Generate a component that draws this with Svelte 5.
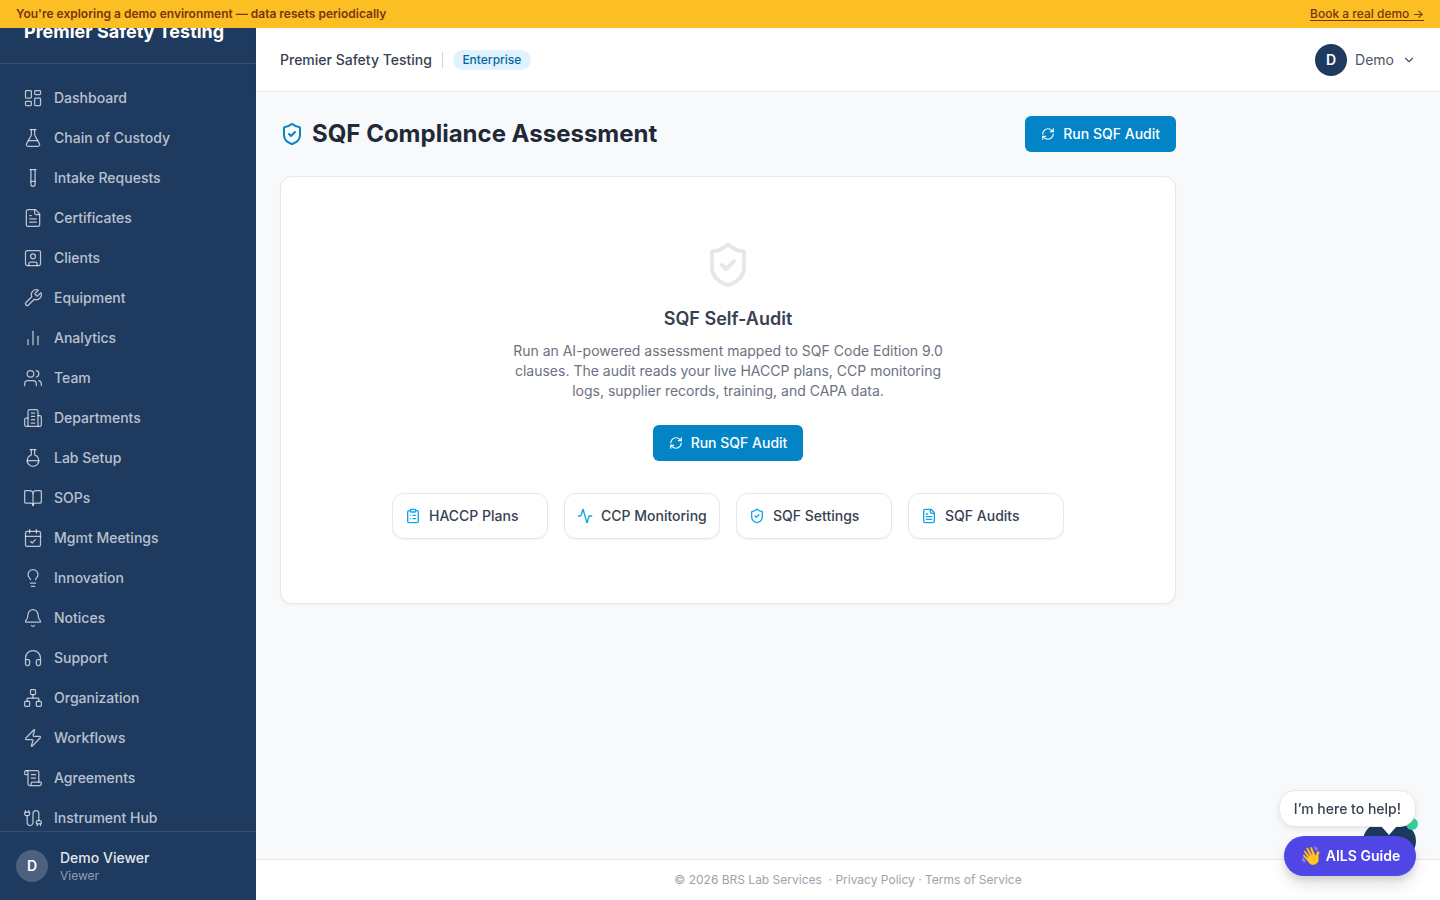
<script lang="ts">
  // Lucide-style icon bodies, kept as strings so nav rows can stay data driven.
  const ICONS: Record<string, string> = {
    dashboard: '<rect x="3" y="3" width="7" height="9" rx="1"/><rect x="14" y="3" width="7" height="5" rx="1"/><rect x="14" y="12" width="7" height="9" rx="1"/><rect x="3" y="16" width="7" height="5" rx="1"/>',
    flask: '<path d="M14 2v6a2 2 0 0 0 .245.96l5.51 10.08A2 2 0 0 1 18 22H6a2 2 0 0 1-1.755-2.96l5.51-10.08A2 2 0 0 0 10 8V2"/><path d="M6.453 15h11.094"/><path d="M8.5 2h7"/>',
    tube: '<path d="M14.5 2v17.5c0 1.4-1.1 2.5-2.5 2.5s-2.5-1.1-2.5-2.5V2"/><path d="M8.5 2h7"/><path d="M14.5 16h-5"/>',
    file: '<path d="M15 2H6a2 2 0 0 0-2 2v16a2 2 0 0 0 2 2h12a2 2 0 0 0 2-2V7Z"/><path d="M14 2v4a2 2 0 0 0 2 2h4"/><path d="M10 9H8"/><path d="M16 13H8"/><path d="M16 17H8"/>',
    client: '<rect x="3" y="3" width="18" height="18" rx="2"/><circle cx="12" cy="10" r="3"/><path d="M7 21v-2a2 2 0 0 1 2-2h6a2 2 0 0 1 2 2v2"/>',
    wrench: '<path d="M14.7 6.3a1 1 0 0 0 0 1.4l1.6 1.6a1 1 0 0 0 1.4 0l3.77-3.77a6 6 0 0 1-7.94 7.94l-6.91 6.91a2.12 2.12 0 0 1-3-3l6.91-6.91a6 6 0 0 1 7.94-7.94l-3.76 3.76z"/>',
    chart: '<path d="M18 20V10"/><path d="M12 20V4"/><path d="M6 20v-6"/>',
    users: '<path d="M16 21v-2a4 4 0 0 0-4-4H6a4 4 0 0 0-4 4v2"/><circle cx="9" cy="7" r="4"/><path d="M22 21v-2a4 4 0 0 0-3-3.87"/><path d="M16 3.13a4 4 0 0 1 0 7.75"/>',
    building: '<path d="M6 22V4a2 2 0 0 1 2-2h8a2 2 0 0 1 2 2v18Z"/><path d="M6 12H4a2 2 0 0 0-2 2v6a2 2 0 0 0 2 2h2"/><path d="M18 9h2a2 2 0 0 1 2 2v9a2 2 0 0 1-2 2h-2"/><path d="M10 6h4"/><path d="M10 10h4"/><path d="M10 14h4"/><path d="M10 18h4"/>',
    flaskRound: '<path d="M10 2v6.292a7 7 0 1 0 4 0V2"/><path d="M5 15h14"/><path d="M8.5 2h7"/>',
    book: '<path d="M12 7v14"/><path d="M3 18a1 1 0 0 1-1-1V4a1 1 0 0 1 1-1h5a4 4 0 0 1 4 4 4 4 0 0 1 4-4h5a1 1 0 0 1 1 1v13a1 1 0 0 1-1 1h-6a3 3 0 0 0-3 3 3 3 0 0 0-3-3z"/>',
    calendar: '<path d="M8 2v4"/><path d="M16 2v4"/><rect x="3" y="4" width="18" height="18" rx="2"/><path d="M3 10h18"/><path d="m9 16 2 2 4-4"/>',
    bulb: '<path d="M15 14c.2-1 .7-1.7 1.5-2.5 1-.9 1.5-2.2 1.5-3.5A6 6 0 0 0 6 8c0 1 .2 2.2 1.5 3.5.7.7 1.3 1.5 1.5 2.5"/><path d="M9 18h6"/><path d="M10 22h4"/>',
    bell: '<path d="M10.268 21a2 2 0 0 0 3.464 0"/><path d="M3.262 15.326A1 1 0 0 0 4 17h16a1 1 0 0 0 .74-1.673C19.41 13.956 18 12.499 18 8A6 6 0 0 0 6 8c0 4.499-1.411 5.956-2.738 7.326"/>',
    headphones: '<path d="M3 14h3a2 2 0 0 1 2 2v3a2 2 0 0 1-2 2H5a2 2 0 0 1-2-2v-7a9 9 0 0 1 18 0v7a2 2 0 0 1-2 2h-1a2 2 0 0 1-2-2v-3a2 2 0 0 1 2-2h3"/>',
    network: '<rect x="16" y="16" width="6" height="6" rx="1"/><rect x="2" y="16" width="6" height="6" rx="1"/><rect x="9" y="2" width="6" height="6" rx="1"/><path d="M5 16v-3a1 1 0 0 1 1-1h12a1 1 0 0 1 1 1v3"/><path d="M12 12V8"/>',
    zap: '<path d="M4 14a1 1 0 0 1-.78-1.63l9.9-10.2a.5.5 0 0 1 .86.46l-1.92 6.02A1 1 0 0 0 13 10h7a1 1 0 0 1 .78 1.63l-9.9 10.2a.5.5 0 0 1-.86-.46l1.92-6.02A1 1 0 0 0 11 14z"/>',
    scroll: '<path d="M15 12h-5"/><path d="M15 8h-5"/><path d="M19 17V5a2 2 0 0 0-2-2H4"/><path d="M8 21h12a2 2 0 0 0 2-2v-1a1 1 0 0 0-1-1H11a1 1 0 0 0-1 1v1a2 2 0 1 1-4 0V5a2 2 0 1 0-4 0v2a1 1 0 0 0 1 1h3"/>',
    cable: '<path d="M17 21v-2a1 1 0 0 1-1-1v-1a2 2 0 0 1 2-2h2a2 2 0 0 1 2 2v1a1 1 0 0 1-1 1"/><path d="M19 15V6.5a1 1 0 0 0-7 0v11a1 1 0 0 1-7 0V9"/><path d="M21 21v-2h-4"/><path d="M3 5h4V3"/><path d="M7 5a1 1 0 0 1 1 1v1a2 2 0 0 1-2 2H4a2 2 0 0 1-2-2V6a1 1 0 0 1 1-1V3"/>',
    shield: '<path d="M20 13c0 5-3.5 7.5-7.66 8.95a1 1 0 0 1-.67-.01C7.5 20.5 4 18 4 13V6a1 1 0 0 1 1-1c2 0 4.5-1.2 6.24-2.72a1.17 1.17 0 0 1 1.52 0C14.51 3.81 17 5 19 5a1 1 0 0 1 1 1z"/><path d="m9 12 2 2 4-4"/>',
    refresh: '<path d="M3 12a9 9 0 0 1 9-9 9.75 9.75 0 0 1 6.74 2.74L21 8"/><path d="M21 3v5h-5"/><path d="M21 12a9 9 0 0 1-9 9 9.75 9.75 0 0 1-6.74-2.74L3 16"/><path d="M8 16H3v5"/>',
    clipboard: '<rect x="8" y="2" width="8" height="4" rx="1"/><path d="M16 4h2a2 2 0 0 1 2 2v14a2 2 0 0 1-2 2H6a2 2 0 0 1-2-2V6a2 2 0 0 1 2-2h2"/><path d="M12 11h4"/><path d="M12 16h4"/><path d="M8 11h.01"/><path d="M8 16h.01"/>',
    activity: '<path d="M22 12h-2.48a2 2 0 0 0-1.93 1.46l-2.35 8.36a.25.25 0 0 1-.48 0L9.24 2.18a.25.25 0 0 0-.48 0l-2.35 8.36A2 2 0 0 1 4.49 12H2"/>',
    chevron: '<path d="m6 9 6 6 6-6"/>',
  };

  const NAV = [
    ['Dashboard', 'dashboard'],
    ['Chain of Custody', 'flask'],
    ['Intake Requests', 'tube'],
    ['Certificates', 'file'],
    ['Clients', 'client'],
    ['Equipment', 'wrench'],
    ['Analytics', 'chart'],
    ['Team', 'users'],
    ['Departments', 'building'],
    ['Lab Setup', 'flaskRound'],
    ['SOPs', 'book'],
    ['Mgmt Meetings', 'calendar'],
    ['Innovation', 'bulb'],
    ['Notices', 'bell'],
    ['Support', 'headphones'],
    ['Organization', 'network'],
    ['Workflows', 'zap'],
    ['Agreements', 'scroll'],
    ['Instrument Hub', 'cable'],
  ];

  const LINKS = [
    ['HACCP Plans', 'clipboard'],
    ['CCP Monitoring', 'activity'],
    ['SQF Settings', 'shield'],
    ['SQF Audits', 'file'],
  ];
</script>

{#snippet icon(name: string, size: number, width = 2)}
  <svg
    class="icon"
    xmlns="http://www.w3.org/2000/svg"
    viewBox="0 0 24 24"
    width={size}
    height={size}
    fill="none"
    stroke="currentColor"
    stroke-width={width}
    stroke-linecap="round"
    stroke-linejoin="round">{@html ICONS[name]}</svg
  >
{/snippet}

{#snippet runButton()}
  <button type="button" class="run-btn">
    {@render icon('refresh', 14)}
    Run SQF Audit
  </button>
{/snippet}

<div class="banner">
  <span>You're exploring a demo environment — data resets periodically</span>
  <a href="#demo">Book a real demo →</a>
</div>

<div class="shell">
  <aside class="sidebar">
    <div class="brand">Premier Safety Testing</div>
    <nav class="nav">
      {#each NAV as [label, name]}
        <a class="nav-item" href="#nav">
          {@render icon(name, 20, 1.5)}
          <span>{label}</span>
        </a>
      {/each}
    </nav>
    <div class="side-user">
      <span class="side-avatar">D</span>
      <div>
        <div class="side-name">Demo Viewer</div>
        <div class="side-role">Viewer</div>
      </div>
    </div>
  </aside>

  <div class="main">
    <header class="topbar">
      <div class="org">
        <span class="org-name">Premier Safety Testing</span>
        <span class="org-sep"></span>
        <span class="org-plan">Enterprise</span>
      </div>
      <button type="button" class="user-menu">
        <span class="user-avatar">D</span>
        <span class="user-name">Demo</span>
        {@render icon('chevron', 14)}
      </button>
    </header>

    <main class="content">
      <div class="page">
        <div class="page-head">
          <h1>
            <span class="head-icon">{@render icon('shield', 24)}</span>
            SQF Compliance Assessment
          </h1>
          {@render runButton()}
        </div>

        <section class="card">
          <span class="card-icon">{@render icon('shield', 48)}</span>
          <h2>SQF Self-Audit</h2>
          <p>
            Run an AI-powered assessment mapped to SQF Code Edition 9.0 clauses. The audit reads
            your live HACCP plans, CCP monitoring logs, supplier records, training, and CAPA data.
          </p>
          {@render runButton()}
          <div class="links">
            {#each LINKS as [label, name]}
              <a class="link" href="#link">
                <span class="link-icon">{@render icon(name, 16)}</span>
                {label}
              </a>
            {/each}
          </div>
        </section>
      </div>
    </main>

    <footer class="footer">
      © 2026 BRS Lab Services &nbsp;· Privacy Policy · Terms of Service
    </footer>
  </div>
</div>

<div class="guide">
  <span class="guide-avatar"></span>
  <span class="guide-dot"></span>
  <div class="guide-bubble">I’m here to help!</div>
  <button type="button" class="guide-btn"><span class="wave">👋</span> AILS Guide</button>
</div>

<style>
  :global(body) {
    margin: 0;
    font-family: Inter, 'Noto Sans', sans-serif;
    background: #f8f9fb;
    overflow: hidden;
  }

  .icon {
    display: block;
    flex: none;
  }

  .banner {
    position: fixed;
    top: 0;
    left: 0;
    right: 0;
    z-index: 20;
    height: 28px;
    box-sizing: border-box;
    padding: 0 16px;
    display: flex;
    align-items: center;
    justify-content: space-between;
    background: #fbbf24;
    color: #78350f;
    font-size: 12px;
    line-height: 16px;
    font-weight: 600;
  }

  .banner a {
    color: inherit;
    font-weight: 500;
    text-decoration: underline;
    text-underline-offset: 2px;
  }

  .shell {
    display: flex;
    height: 100vh;
  }

  .sidebar {
    width: 256px;
    flex: none;
    display: flex;
    flex-direction: column;
    background: #1e3a5f;
    color: #fff;
  }

  .brand {
    height: 64px;
    flex: none;
    box-sizing: border-box;
    padding-left: 24px;
    display: flex;
    align-items: center;
    border-bottom: 1px solid rgba(255, 255, 255, 0.1);
    font-size: 18px;
    font-weight: 700;
  }

  .nav {
    flex: 1;
    min-height: 0;
    overflow: hidden;
    padding-top: 14px;
  }

  .nav-item {
    height: 40px;
    padding-left: 23px;
    display: flex;
    align-items: center;
    gap: 11px;
    color: rgba(255, 255, 255, 0.7);
    font-size: 14px;
    line-height: 20px;
    font-weight: 500;
    text-decoration: none;
  }

  .side-user {
    height: 69px;
    flex: none;
    box-sizing: border-box;
    padding: 0 16px;
    display: flex;
    align-items: center;
    gap: 12px;
    border-top: 1px solid rgba(255, 255, 255, 0.1);
  }

  .side-avatar {
    width: 32px;
    height: 32px;
    border-radius: 50%;
    display: flex;
    align-items: center;
    justify-content: center;
    background: rgba(255, 255, 255, 0.2);
    font-size: 14px;
    line-height: 20px;
    font-weight: 600;
  }

  .side-name {
    font-size: 14px;
    font-weight: 500;
    line-height: 20px;
    color: rgba(255, 255, 255, 0.9);
  }

  .side-role {
    font-size: 12px;
    line-height: 16px;
    color: rgba(255, 255, 255, 0.5);
  }

  .main {
    flex: 1;
    min-width: 0;
    padding-top: 28px;
    display: flex;
    flex-direction: column;
  }

  .topbar {
    height: 64px;
    flex: none;
    box-sizing: border-box;
    padding: 0 24px;
    display: flex;
    align-items: center;
    justify-content: space-between;
    background: #fff;
    border-bottom: 1px solid #e5e7eb;
    box-shadow: 0 1px 2px rgba(0, 0, 0, 0.05);
  }

  .org {
    display: flex;
    align-items: center;
  }

  .org-name {
    font-size: 14px;
    font-weight: 500;
    color: #374151;
  }

  .org-sep {
    width: 1px;
    height: 16px;
    margin: 0 10px;
    background: #d1d5db;
  }

  .org-plan {
    padding: 2px 9.5px;
    border-radius: 999px;
    background: #e0f2fe;
    color: #0369a1;
    font-size: 12px;
    line-height: 16px;
    font-weight: 500;
  }

  .user-menu {
    appearance: none;
    border: 0;
    background: none;
    padding: 0;
    display: flex;
    align-items: center;
    font: inherit;
    color: #4b5563;
  }

  .user-avatar {
    width: 32px;
    height: 32px;
    border-radius: 50%;
    display: flex;
    align-items: center;
    justify-content: center;
    background: #1e3a5f;
    color: #fff;
    font-size: 14px;
    font-weight: 600;
  }

  .user-name {
    margin: 0 8px;
    font-size: 14px;
    font-weight: 400;
  }

  .content {
    flex: 1;
    min-height: 0;
    padding: 24px;
    background: #f8f9fb;
  }

  .page {
    max-width: 896px;
  }

  .page-head {
    display: flex;
    align-items: center;
    justify-content: space-between;
    margin-bottom: 24px;
  }

  h1 {
    margin: 0;
    display: flex;
    align-items: center;
    gap: 8px;
    font-size: 24px;
    line-height: 32px;
    font-weight: 700;
    color: #1f2937;
  }

  .head-icon {
    color: #0284c7;
  }

  .run-btn {
    appearance: none;
    border: 0;
    height: 36px;
    padding: 0 16px;
    display: inline-flex;
    align-items: center;
    gap: 8px;
    border-radius: 6px;
    background: #0284c7;
    color: #fff;
    font: inherit;
    font-size: 14px;
    line-height: 20px;
    font-weight: 500;
  }

  .card {
    box-sizing: border-box;
    padding: 64px 24px;
    display: flex;
    flex-direction: column;
    align-items: center;
    text-align: center;
    background: #fff;
    border: 1px solid #e5e7eb;
    border-radius: 12px;
    box-shadow: 0 1px 2px rgba(0, 0, 0, 0.05);
  }

  .card-icon {
    color: #e5e7eb;
    margin-bottom: 16px;
  }

  h2 {
    margin: 0 0 8px;
    font-size: 18px;
    line-height: 28px;
    font-weight: 600;
    color: #374151;
  }

  p {
    max-width: 448px;
    margin: 0 0 24px;
    font-size: 14px;
    line-height: 20px;
    color: #6b7280;
  }

  .links {
    width: 672px;
    margin-top: 32px;
    display: grid;
    grid-template-columns: repeat(4, 1fr);
    gap: 16px;
  }

  .link {
    height: 46px;
    box-sizing: border-box;
    padding: 0 12px;
    display: flex;
    align-items: center;
    gap: 8px;
    background: #fff;
    border: 1px solid #e5e7eb;
    border-radius: 12px;
    box-shadow: 0 1px 2px rgba(0, 0, 0, 0.05);
    color: #374151;
    font-size: 14px;
    line-height: 20px;
    font-weight: 500;
    text-decoration: none;
    white-space: nowrap;
  }

  .link-icon {
    color: #0ea5e9;
  }

  .footer {
    height: 41px;
    flex: none;
    box-sizing: border-box;
    display: flex;
    align-items: center;
    justify-content: center;
    background: #fff;
    border-top: 1px solid #e5e7eb;
    color: #9ca3af;
    font-size: 12px;
    line-height: 16px;
    white-space: pre;
  }

  /* floating helper, sits over the page corner */
  .guide {
    position: fixed;
    right: 24px;
    bottom: 24px;
    width: 137px;
    height: 86px;
  }

  .guide-avatar {
    position: absolute;
    right: 0;
    top: 33px;
    width: 53px;
    height: 36px;
    border-radius: 18px;
    background: #1e3a5f;
  }

  .guide-dot {
    position: absolute;
    right: -2px;
    top: 28px;
    width: 12px;
    height: 12px;
    border-radius: 50%;
    background: #34d399;
  }

  .guide-bubble {
    position: absolute;
    top: 0;
    right: 0;
    box-sizing: border-box;
    height: 37px;
    padding: 0 14px;
    display: flex;
    align-items: center;
    background: #fff;
    border: 1px solid #e5e7eb;
    border-radius: 16px;
    box-shadow: 0 2px 6px rgba(0, 0, 0, 0.08);
    color: #374151;
    font-size: 14px;
    line-height: 20px;
    font-weight: 500;
    white-space: nowrap;
  }

  .guide-bubble::after {
    content: '';
    position: absolute;
    right: 18px;
    bottom: -9px;
    width: 0;
    height: 0;
    border-left: 8px solid transparent;
    border-right: 8px solid transparent;
    border-top: 9px solid #fff;
  }

  .guide-btn {
    position: absolute;
    right: 0;
    bottom: 0;
    appearance: none;
    border: 0;
    height: 40px;
    width: 132px;
    padding: 0;
    display: flex;
    align-items: center;
    justify-content: center;
    gap: 4px;
    border-radius: 20px;
    background: #4f46e5;
    box-shadow: 0 10px 15px rgba(0, 0, 0, 0.1), 0 4px 6px rgba(0, 0, 0, 0.1);
    color: #fff;
    font: inherit;
    font-size: 14px;
    line-height: 20px;
    font-weight: 600;
  }

  .wave {
    font-size: 18px;
    line-height: 1;
  }
</style>
